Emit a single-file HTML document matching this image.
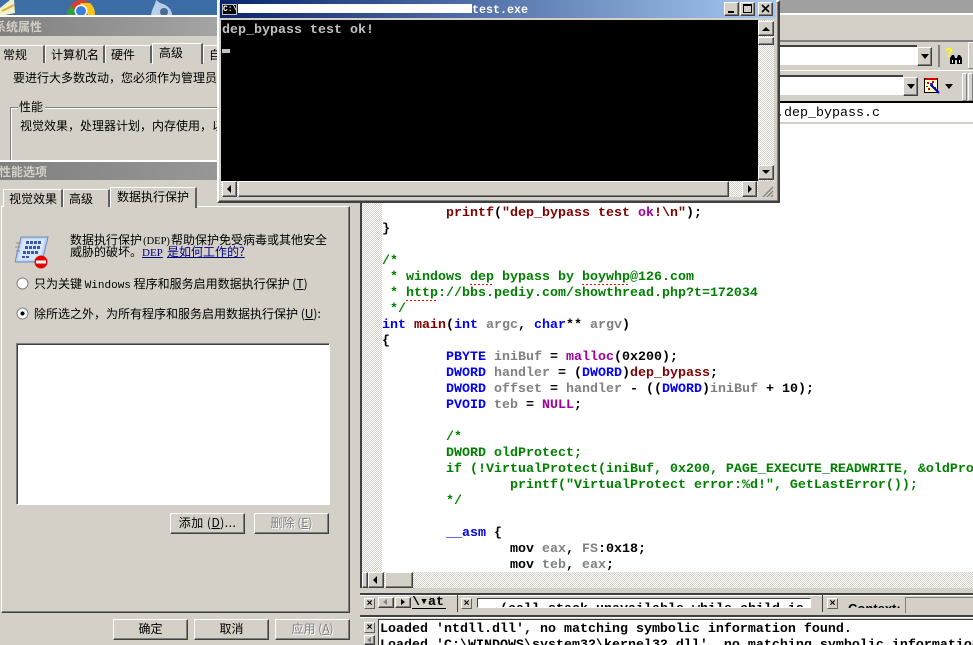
<!DOCTYPE html>
<html><head><meta charset="utf-8"><style>
html,body{margin:0;padding:0;background:#fff}
#r{position:relative;width:973px;height:645px;overflow:hidden;background:#fff;font:12px/14px "WenQuanYi Zen Hei","Noto Sans CJK SC","Liberation Sans",sans-serif;color:#000}
.a{position:absolute}
.t{position:absolute;white-space:pre}
.g{background:#d4d0c8}
.ck{background-color:#d4d0c8;background-image:conic-gradient(#fff 25%,transparent 0 50%,#fff 0 75%,transparent 0);background-size:2px 2px}
.btn{position:absolute;background:#d4d0c8;box-sizing:border-box;border:1px solid;border-color:#fff #404040 #404040 #fff;box-shadow:inset -1px -1px 0 #808080;text-align:center}
.sink{position:absolute;box-sizing:border-box;background:#fff;border:1px solid;border-color:#808080 #fff #fff #808080;box-shadow:inset 1px 1px 0 #404040}
.tab{position:absolute;box-sizing:border-box;background:#d4d0c8;border:1px solid #fff;border-bottom:0;border-right:2px solid #606060;text-align:left;white-space:pre;overflow:hidden}
.code{font:bold 13.333px/16px "Liberation Mono",monospace;color:#000}
.k{color:#0000ff}.f{color:#800000}.m{color:#a000a0}.v{color:#808080}.c{color:#008000}
.sq{background:repeating-linear-gradient(90deg,#f00 0 2px,transparent 2px 4px) 0 14px/100% 1px no-repeat}
.x{position:absolute;width:11px;height:11px;box-sizing:border-box;background:#d4d0c8;border:1px solid;border-color:#fff #606060 #606060 #fff;font:bold 10px/9px "Liberation Sans",sans-serif;text-align:center}
.arr{position:absolute;width:0;height:0}
.mn{font:11px/14px "Liberation Serif",serif}
</style></head><body><div id="r">

<!-- right IDE background -->
<div class="a" style="left:780px;top:0;width:193px;height:13px;background:#a0a0a0"></div>
<div class="a g" style="left:780px;top:13px;width:193px;height:90px;border-top:2px solid #fff;box-sizing:border-box"></div>
<div class="a" style="left:780px;top:40px;width:193px;height:2px;background:#808080"></div>
<div class="a" style="left:780px;top:70px;width:193px;height:1px;background:#fff"></div>
<div class="a" style="left:780px;top:45px;width:137px;height:22px;background:#fff;border-top:2px solid #404040;border-bottom:2px solid #d4d0c8;box-sizing:border-box"></div>
<div class="btn" style="left:917px;top:47px;width:15px;height:19px"></div>
<div class="arr" style="left:921px;top:54px;border:4px solid transparent;border-top:5px solid #000;border-bottom:0"></div>
<div class="a" style="left:938px;top:45px;width:2px;height:22px;background:#808080"></div>
<svg class="a" style="left:949px;top:54px" width="14" height="10"><path d="M1 10V4L3 1H5L6 4H8L9 1H11L13 4V10H8V6H6V10Z" fill="#000"/><path d="M3 6h1v3H3zM10 6h1v3h-1z" fill="#fff"/></svg>
<div class="t" style="left:945px;top:45px;font:bold 13px/15px 'Liberation Sans',sans-serif;color:#ffff00">?</div>
<div class="a" style="left:968px;top:42px;width:5px;height:27px;border-left:1px solid #fff;border-top:1px solid #fff;border-bottom:1px solid #808080;box-sizing:border-box"></div>
<div class="a" style="left:780px;top:75px;width:123px;height:22px;background:#fff;border-top:2px solid #404040;border-bottom:2px solid #d4d0c8;box-sizing:border-box"></div>
<div class="btn" style="left:903px;top:77px;width:15px;height:19px"></div>
<div class="arr" style="left:907px;top:84px;border:4px solid transparent;border-top:5px solid #000;border-bottom:0"></div>
<svg class="a" style="left:924px;top:78px" width="17" height="16"><rect x="0.5" y="0.5" width="13" height="14" fill="#ffffc0" stroke="#000"/><rect x="1" y="0" width="12" height="2" fill="#d00"/><path d="M3 4h2v2H3zM8 3h2v2H8zM4 10h2v2H4zM10 9h2v2h-2z" fill="#d00"/><path d="M6 5h3v3H6zM2 8h2v1H2z" fill="#2030c0"/><path d="M7 7l8 8" stroke="#0000c0" stroke-width="2"/></svg>
<div class="arr" style="left:945px;top:84px;border:4px solid transparent;border-top:5px solid #000;border-bottom:0"></div>
<div class="a" style="left:962px;top:73px;width:3px;height:26px;border:1px solid;border-color:#fff #808080 #808080 #fff"></div>
<div class="a" style="left:968px;top:73px;width:3px;height:26px;border:1px solid;border-color:#fff #808080 #808080 #fff"></div>
<div class="a" style="left:780px;top:101px;width:193px;height:2px;background:#000"></div>
<div class="a" style="left:780px;top:103px;width:193px;height:19px;background:#fff"></div>
<div class="t" style="left:776px;top:106px;font:13.333px/16px 'Liberation Mono',monospace;color:#000">.dep_bypass.c</div>
<div class="a g" style="left:780px;top:122px;width:193px;height:2px"></div>

<!-- editor -->
<div class="a g" style="left:350px;top:200px;width:12px;height:445px"></div>
<div class="a" style="left:358px;top:203px;width:2px;height:442px;background:#fff"></div>
<div class="a" style="left:360px;top:203px;width:2px;height:385px;background:#404040"></div>
<div class="a ck" style="left:362px;top:203px;width:20px;height:369px"></div>
<div class="a code" id="ed" style="left:382px;top:0;width:591px;height:572px;overflow:hidden">
<div class="t" style="left:64px;top:206px"><span class="f">printf</span>(<span class="f">"dep_bypass test </span><span class="m">ok</span><span class="f">!\n"</span>);</div>
<div class="t" style="left:0;top:222px">}</div>
<div class="t c" style="left:0;top:254px">/*</div>
<div class="t c" style="left:0;top:270px"> * windows <span class="sq">dep</span> bypass by <span class="sq">boywhp</span>@126.com</div>
<div class="t c" style="left:0;top:286px"> * <span class="sq">http</span>://bbs.pediy.com/showthread.php?t=172034</div>
<div class="t c" style="left:0;top:302px"> */</div>
<div class="t" style="left:0;top:318px"><span class="k">int</span> <span class="f">main</span>(<span class="k">int</span> <span class="v">argc</span>, <span class="k">char</span>** <span class="v">argv</span>)</div>
<div class="t" style="left:0;top:334px">{</div>
<div class="t" style="left:64px;top:350px"><span class="k">PBYTE</span> <span class="v">iniBuf</span> = <span class="m">malloc</span>(0x200);</div>
<div class="t" style="left:64px;top:366px"><span class="k">DWORD</span> <span class="v">handler</span> = (<span class="k">DWORD</span>)<span class="f">dep_bypass</span>;</div>
<div class="t" style="left:64px;top:382px"><span class="k">DWORD</span> <span class="v">offset</span> = <span class="v">handler</span> - ((<span class="k">DWORD</span>)<span class="v">iniBuf</span> + 10);</div>
<div class="t" style="left:64px;top:398px"><span class="k">PVOID</span> <span class="v">teb</span> = <span class="m">NULL</span>;</div>
<div class="t c" style="left:64px;top:430px">/*</div>
<div class="t c" style="left:64px;top:446px">DWORD oldProtect;</div>
<div class="t c" style="left:64px;top:462px">if (!VirtualProtect(iniBuf, 0x200, PAGE_EXECUTE_READWRITE, &amp;oldProtect))</div>
<div class="t c" style="left:128px;top:478px">printf("VirtualProtect error:%d!", GetLastError());</div>
<div class="t c" style="left:64px;top:494px">*/</div>
<div class="t" style="left:64px;top:526px"><span class="k">__asm</span> {</div>
<div class="t" style="left:128px;top:542px">mov <span class="v">eax</span>, <span class="v">FS</span>:0x18;</div>
<div class="t" style="left:128px;top:558px">mov <span class="v">teb</span>, <span class="v">eax</span>;</div>
</div>

<!-- editor h scrollbar -->
<div class="a ck" style="left:362px;top:572px;width:611px;height:16px"></div>
<div class="btn" style="left:362px;top:572px;width:6px;height:16px"></div>
<div class="btn" style="left:368px;top:572px;width:16px;height:16px"></div>
<div class="arr" style="left:373px;top:576px;border:4px solid transparent;border-right:4px solid #000;border-left:0"></div>
<div class="btn" style="left:385px;top:572px;width:28px;height:16px"></div>

<!-- bottom panes -->
<div class="a g" style="left:360px;top:588px;width:613px;height:32px"></div>
<div class="a" style="left:360px;top:593px;width:613px;height:2px;background:#404040"></div>
<div class="a" style="left:360px;top:595px;width:613px;height:1px;background:#fff"></div>
<div class="x" style="left:364px;top:598px">×</div>
<div class="btn" style="left:378px;top:597px;width:16px;height:11px"></div>
<div class="arr" style="left:383px;top:599px;border:3px solid transparent;border-right:4px solid #808080;border-left:0"></div>
<div class="btn" style="left:395px;top:597px;width:16px;height:11px"></div>
<div class="arr" style="left:401px;top:599px;border:3px solid transparent;border-left:4px solid #000;border-right:0"></div>
<div class="t" style="left:412px;top:596px;height:13px;width:34px;overflow:hidden;font:bold 13.333px/13px 'Liberation Mono',monospace;border-bottom:1px solid #000;box-sizing:border-box">\▾at</div>
<div class="a" style="left:457px;top:595px;width:1px;height:17px;background:#404040"></div>
<div class="x" style="left:461px;top:598px">×</div>
<div class="a" style="left:477px;top:598px;width:334px;height:10px;background:#fff;border:1px solid #808080;border-color:#404040 #fff #fff #404040;box-sizing:border-box;overflow:hidden"><div class="t" style="left:22px;top:3px;font:bold 13.333px/16px 'Liberation Mono',monospace">(call stack unavailable while child is</div></div>
<div class="a" style="left:822px;top:595px;width:1px;height:17px;background:#404040"></div>
<div class="x" style="left:827px;top:598px">×</div>
<div class="a" style="left:848px;top:604px;width:56px;height:4px;overflow:hidden"><div class="t" style="left:0;top:-2px;font:bold 13px/14px 'Liberation Sans',sans-serif">Context:</div></div>
<div class="a" style="left:905px;top:597px;width:68px;height:15px;border-left:1px solid #808080;border-top:1px solid #808080"></div>
<div class="a" style="left:360px;top:615px;width:613px;height:2px;background:#404040"></div>
<div class="a" style="left:360px;top:617px;width:613px;height:1px;background:#fff"></div>
<div class="a g" style="left:360px;top:618px;width:18px;height:27px"></div>
<div class="x" style="left:364px;top:622px">×</div>
<div class="btn" style="left:364px;top:635px;width:11px;height:10px"></div>
<div class="arr" style="left:367px;top:637px;border:3px solid transparent;border-right:4px solid #808080;border-left:0"></div>
<div class="a" style="left:378px;top:619px;width:595px;height:26px;background:#fff;border-left:1px solid #404040;border-top:1px solid #404040;box-sizing:border-box;overflow:hidden">
<div class="t" style="left:1px;top:2px;font:bold 13.333px/16px 'Liberation Mono',monospace">Loaded 'ntdll.dll', no matching symbolic information found.</div>
<div class="t" style="left:1px;top:18px;font:bold 13.333px/16px 'Liberation Mono',monospace">Loaded 'C:\WINDOWS\system32\kernel32.dll', no matching symbolic information found.</div>
</div>

<!-- left dialogs -->
<div class="a g" style="left:0;top:0;width:217px;height:645px"></div>
<div class="a" style="left:0;top:0;width:217px;height:15px;background:linear-gradient(90deg,#3f6ea6,#3a6ca6)"></div>
<svg class="a" style="left:0;top:0" width="217" height="15">
<path d="M0 8L10 0H14L15 13L5 15H0Z" fill="#f4f0c8"/><path d="M2 11L14 5" stroke="#e0b030" stroke-width="2"/>
<path d="M67 15A14 15 0 0 1 95 15Z" fill="#dd3b2f"/><path d="M67 15A14 15 0 0 1 71 5L78 15Z" fill="#2f9e45"/><path d="M88 15H95A14 15 0 0 0 90 3L80 3Z" fill="#f6c518"/><circle cx="81" cy="11" r="6.5" fill="#fff"/><circle cx="81" cy="11" r="5" fill="#3a82d8"/>
<path d="M151 15C152 8 155 6 156 0L160 3C168 5 172 10 172 15Z" fill="#b8cfe8"/><circle cx="164" cy="12" r="4" fill="#4a6a98"/>
</svg>
<div class="a" style="left:0;top:15px;width:217px;height:2px;background:#fff"></div>
<div class="a" style="left:0;top:17px;width:217px;height:19px;background:linear-gradient(90deg,#808080,#a4a4a4)"></div>
<div class="t" style="left:-6px;top:20px;font-weight:bold;font-size:12px;color:#d4d0c8">系统属性</div>
<div class="a" style="left:0;top:62px;width:217px;height:1px;background:#fff"></div>
<div class="tab" style="left:-2px;top:45px;width:47px;height:18px;line-height:18px;padding-left:4px">常规</div>
<div class="tab" style="left:45px;top:45px;width:60px;height:18px;line-height:18px;padding-left:5px">计算机名</div>
<div class="tab" style="left:105px;top:45px;width:47px;height:18px;line-height:18px;padding-left:5px">硬件</div>
<div class="tab" style="left:152px;top:43px;width:51px;height:21px;line-height:18px;padding-left:6px">高级</div>
<div class="tab" style="left:203px;top:45px;width:16px;height:18px;line-height:18px;padding-left:5px;border-right:0">自</div>
<div class="t" style="left:13px;top:71px">要进行大多数改动，您必须作为管理员</div>
<div class="a" style="left:10px;top:107px;width:207px;height:54px;border-left:1px solid #808080;border-top:1px solid #808080;box-shadow:inset 1px 1px 0 #fff"></div>
<div class="t g" style="left:18px;top:100px;padding:0 2px 0 1px">性能</div>
<div class="t" style="left:20px;top:119px;width:197px;overflow:hidden">视觉效果，处理器计划，内存使用，以</div>

<div class="a" style="left:0;top:160px;width:217px;height:2px;background:#fff"></div>
<div class="a" style="left:0;top:162px;width:360px;height:18px;background:linear-gradient(90deg,#808080,#a6a6a6)"></div>
<div class="a g" style="left:0;top:180px;width:360px;height:465px"></div>
<div class="t" style="left:-1px;top:165px;font-weight:bold;color:#d4d0c8">性能选项</div>

<div class="a g" style="left:1px;top:206px;width:349px;height:407px;box-sizing:border-box;border:1px solid;border-color:#fff #404040 #404040 #fff;box-shadow:inset -1px -1px 0 #808080"></div>
<div class="tab" style="left:3px;top:189px;width:60px;height:18px;line-height:17px;padding-left:5px">视觉效果</div>
<div class="tab" style="left:63px;top:189px;width:47px;height:18px;line-height:17px;padding-left:5px">高级</div>
<div class="tab" style="left:110px;top:187px;width:87px;height:21px;line-height:18px;padding-left:6px">数据执行保护</div>

<svg class="a" style="left:15px;top:236px" width="34" height="34">
<path d="M6 1H33L27 26H0Z" fill="#b9d3f4" stroke="#7088b8"/>
<path d="M8 3H30L25 24H3Z" fill="#d8e6fa"/>
<path d="M11 5h3v3h-3zM15 5h3v3h-3zM19 5h3v3h-3zM23 5h3v3h-3zM10 10h3v3h-3zM14 10h3v3h-3zM18 10h3v3h-3zM22 10h3v3h-3zM8 15h3v3H8zM12 15h3v3h-3zM16 15h3v3h-3zM20 15h3v3h-3zM7 20h3v2H7zM11 20h3v2h-3z" fill="#3858a8"/>
<path d="M1 7h5M0 11h5M1 15h4" stroke="#909090"/>
<circle cx="26" cy="26" r="6.5" fill="#e80000"/><rect x="21" y="24.5" width="10" height="3" fill="#fff"/>
</svg>
<div class="t" style="left:70px;top:233px">数据执行保护<span class="mn" style="display:inline-block;width:29px;text-align:center;font-size:10.5px">(DEP)</span>帮助保护免受病毒或其他安全</div>
<div class="t" style="left:70px;top:245px">威胁的破坏。<span style="color:#000080;text-decoration:underline"><span class="mn" style="display:inline-block;width:25px;text-align:left;text-decoration:underline">DEP</span>是如何工作的?</span></div>

<svg class="a" style="left:16px;top:277px" width="13" height="13"><circle cx="6.5" cy="6.5" r="5.5" fill="#fff" stroke="#808080"/></svg>
<div class="t" style="left:34px;top:277px">只为关键 <span style="font:11px/14px 'Liberation Mono',monospace">Windows</span> 程序和服务启用数据执行保护 (<u>T</u>)</div>
<svg class="a" style="left:16px;top:307px" width="13" height="13"><circle cx="6.5" cy="6.5" r="5.5" fill="#fff" stroke="#808080"/><circle cx="6.5" cy="6.5" r="2" fill="#000"/></svg>
<div class="t" style="left:34px;top:307px">除所选之外，为所有程序和服务启用数据执行保护 (<u>U</u>):</div>

<div class="sink" style="left:16px;top:343px;width:314px;height:162px"></div>

<div class="btn" style="left:170px;top:513px;width:75px;height:21px;line-height:18px;letter-spacing:.5px">添加 (<u>D</u>)...</div>
<div class="btn" style="left:254px;top:513px;width:75px;height:21px;line-height:18px;color:#808080;text-shadow:1px 1px 0 #fff">删除 (<u>E</u>)</div>
<div class="btn" style="left:113px;top:619px;width:75px;height:21px;line-height:18px">确定</div>
<div class="btn" style="left:194px;top:619px;width:75px;height:21px;line-height:18px">取消</div>
<div class="btn" style="left:275px;top:619px;width:75px;height:21px;line-height:18px;color:#808080;text-shadow:1px 1px 0 #fff">应用 (<u>A</u>)</div>

<!-- console window -->
<div class="a g" style="left:217px;top:0;width:563px;height:203px;box-sizing:border-box;border:2px solid;border-color:#fff #404040 #404040 #fff;box-shadow:inset -1px -1px 0 #808080"></div>
<div class="a" style="left:220px;top:0;width:556px;height:18px;background:linear-gradient(90deg,#0a246a,#a6caf0)"></div>
<div class="a" style="left:222px;top:4px;width:15px;height:11px;background:#000;border:1px solid #c0c0c0;box-sizing:border-box;color:#fff;font:bold 8px/9px 'Liberation Mono',monospace;overflow:hidden">C:\</div>
<div class="t" style="left:472px;top:3px;font:bold 11.67px/14px 'Liberation Mono',monospace;color:#fff">test.exe</div>
<div class="a" style="left:238px;top:4px;width:234px;height:9px;background:#fff"></div>
<div class="btn" style="left:724px;top:2px;width:15px;height:14px"></div>
<div class="a" style="left:728px;top:11px;width:6px;height:2px;background:#000"></div>
<div class="btn" style="left:740px;top:2px;width:15px;height:14px"></div>
<div class="a" style="left:743px;top:4px;width:9px;height:9px;border:1px solid #000;border-top:2px solid #000;box-sizing:border-box"></div>
<div class="btn" style="left:758px;top:2px;width:15px;height:14px"></div>
<svg class="a" style="left:761px;top:4px" width="9" height="9"><path d="M1 1L8 8M8 1L1 8" stroke="#000" stroke-width="1.6"/></svg>
<div class="a" style="left:221px;top:20px;width:537px;height:161px;background:#000;overflow:hidden">
<div class="t" style="left:1px;top:3px;font:bold 13.333px/16px 'Liberation Mono',monospace;color:#c0c0c0">dep_bypass test ok!</div>
<div class="a" style="left:1px;top:29px;width:8px;height:4px;background:#c0c0c0"></div>
</div>
<div class="a ck" style="left:758px;top:20px;width:16px;height:161px"></div>
<div class="btn" style="left:758px;top:21px;width:16px;height:15px"></div>
<div class="arr" style="left:762px;top:27px;border:4px solid transparent;border-bottom:4px solid #000;border-top:0"></div>
<div class="btn" style="left:758px;top:37px;width:16px;height:8px"></div>
<div class="btn" style="left:758px;top:165px;width:16px;height:15px"></div>
<div class="arr" style="left:762px;top:170px;border:4px solid transparent;border-top:4px solid #000;border-bottom:0"></div>
<div class="a ck" style="left:221px;top:181px;width:537px;height:16px"></div>
<div class="btn" style="left:222px;top:181px;width:15px;height:16px"></div>
<div class="arr" style="left:227px;top:185px;border:4px solid transparent;border-right:4px solid #000;border-left:0"></div>
<div class="btn" style="left:238px;top:181px;width:491px;height:16px"></div>
<div class="btn" style="left:742px;top:181px;width:15px;height:16px"></div>
<div class="arr" style="left:748px;top:185px;border:4px solid transparent;border-left:4px solid #000;border-right:0"></div>
<svg class="a" style="left:762px;top:186px" width="12" height="11"><path d="M1 11L11 1M5 11L11 5M9 11L11 9" stroke="#808080" stroke-width="1.3"/></svg>
</div></body></html>
